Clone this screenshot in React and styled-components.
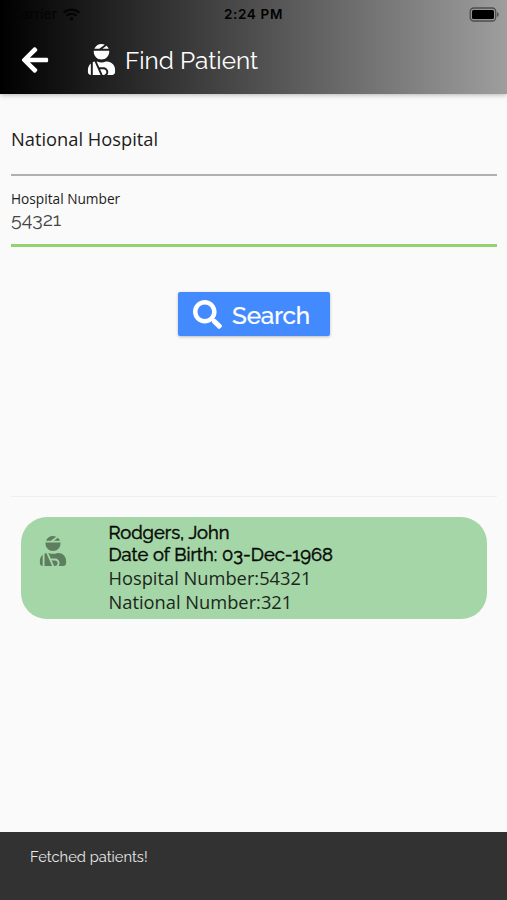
import React from "react";
import styled, { createGlobalStyle } from "styled-components";
import { FaArrowLeft, FaSearch, FaUserInjured, FaWifi } from "react-icons/fa";

const GlobalStyle = createGlobalStyle`
  *, *::before, *::after { box-sizing: border-box; }
  body { margin: 0; background: #fafafa; overflow: hidden; }
`;

const display = `"Raleway", "Lato", sans-serif`;
const body = `"Open Sans", sans-serif`;

const Screen = styled.div`
  display: flex;
  flex-direction: column;
  width: 507px;
  height: 900px;
  background: #fafafa;
  color: #1c1c1c;
  font-family: ${body};
  white-space: nowrap;
`;

const Header = styled.header`
  flex: none;
  height: 94px;
  background: linear-gradient(90deg, #000 0%, #4e4e4e 50%, #9e9e9e 100%);
  box-shadow: 0 1px 5px rgba(0, 0, 0, 0.28);
`;

const StatusBar = styled.div`
  display: grid;
  grid-template-columns: 1fr auto 1fr;
  align-items: center;
  height: 27px;
  padding: 0 7px 0 12px;
  color: #000;
  font: 500 13.5px/27px "Inter", sans-serif;
`;

const Carrier = styled.div`
  display: flex;
  align-items: center;
  gap: 6px;
  color: #040404;
`;

const Clock = styled.time`
  padding: 1px 5px 0 0;
  font-weight: 600;
  letter-spacing: 0.65px;
`;

const Battery = styled.svg`
  justify-self: end;
  width: 31px;
  height: 15px;
`;

const TitleBar = styled.div`
  display: flex;
  align-items: center;
  height: 66px;
  padding-left: 20px;
  color: #fff;
`;

const BackButton = styled.button`
  display: flex;
  width: 66px;
  padding: 0;
  border: 0;
  background: none;
  color: inherit;
`;

const PatientIcon = styled(FaUserInjured)`
  flex: none;
  margin-bottom: 1px;
`;

const Title = styled.h1`
  margin: 2px 0 0 8px;
  font: 400 24.3px/30px ${display};
  letter-spacing: 0;
`;

const Form = styled.form`
  display: flex;
  flex-direction: column;
  height: 403px;
  margin: 0 10px 0 11px;
  border-bottom: 1px solid #efefef;
`;

const SelectField = styled.div`
  height: 82px;
  padding-top: 32px;
  border-bottom: 2px solid #b0b0b0;
  font-size: 18.3px;
  line-height: 26px;
`;

const InputField = styled.label`
  display: flex;
  flex-direction: column;
  height: 71px;
  padding-top: 13px;
  border-bottom: 3px solid #94d36b;
  font-size: 13.7px;
  line-height: 19px;
`;

const InputValue = styled.span`
  color: #444;
  font: 400 19.5px/24px ${display};
`;

const SearchButton = styled.button`
  display: flex;
  align-items: center;
  align-self: center;
  width: 152px;
  height: 44px;
  margin-top: 45px;
  padding: 1px 0 0 15px;
  gap: 10px;
  border: 0;
  border-radius: 2px;
  background: #448aff;
  box-shadow: 0 1px 3px rgba(0, 0, 0, 0.25);
  color: #fff;
  font: 500 24.3px/44px ${display};
  letter-spacing: -0.15px;
  -webkit-text-stroke: 0.2px;
`;

const SearchLabel = styled.span`
  padding-top: 2px;
`;

const PatientCard = styled.article`
  display: flex;
  height: 102px;
  margin: 20px 20px 0 21px;
  padding: 5px 0 0 17px;
  border-radius: 26px;
  background: #a5d6a7;
`;

const CardIcon = styled.div`
  width: 70.5px;
  padding-top: 14px;
  color: #5d7e5f;
`;

const CardHeading = styled.div`
  color: #050905;
  font: 400 18.4px/22px ${display};
  -webkit-text-stroke: 0.5px;
`;

const CardLine = styled.div`
  height: 24px;
  color: #1c271c;
  font-size: 18.3px;
  line-height: 24px;
`;

const Snackbar = styled.div`
  height: 68px;
  margin-top: auto;
  padding: 13px 30px;
  background: #323232;
  color: #e8e8e8;
  font: 400 14.7px/24px ${display};
`;

export default function App() {
  return (
    <>
      <GlobalStyle />
      <Screen>
        <Header>
          <StatusBar>
            <Carrier>Carrier <FaWifi size={17} /></Carrier>
            <Clock>2:24 PM</Clock>
            <Battery viewBox="0 0 31 15">
              <rect x="1.2" y="1" width="25.5" height="13" rx="3.5" fill="none" stroke="#4d4d4d" strokeWidth="1.3" />
              <rect x="3" y="3" width="22" height="9" rx="1.5" fill="#000" />
              <path d="M28 5.2v4.6c2.4-1 2.4-3.6 0-4.6z" fill="#555" />
            </Battery>
          </StatusBar>
          <TitleBar>
            <BackButton aria-label="Back"><FaArrowLeft size={30} /></BackButton>
            <PatientIcon size={31} />
            <Title>Find Patient</Title>
          </TitleBar>
        </Header>
        <Form>
          <SelectField>National Hospital</SelectField>
          <InputField>
            Hospital Number
            <InputValue>54321</InputValue>
          </InputField>
          <SearchButton type="button">
            <FaSearch size={29} />
            <SearchLabel>Search</SearchLabel>
          </SearchButton>
        </Form>
        <PatientCard>
          <CardIcon><FaUserInjured size={30} /></CardIcon>
          <div>
            <CardHeading>Rodgers, John</CardHeading>
            <CardHeading>Date of Birth: 03-Dec-1968</CardHeading>
            <CardLine>Hospital Number:54321</CardLine>
            <CardLine>National Number:321</CardLine>
          </div>
        </PatientCard>
        <Snackbar>Fetched patients!</Snackbar>
      </Screen>
    </>
  );
}
